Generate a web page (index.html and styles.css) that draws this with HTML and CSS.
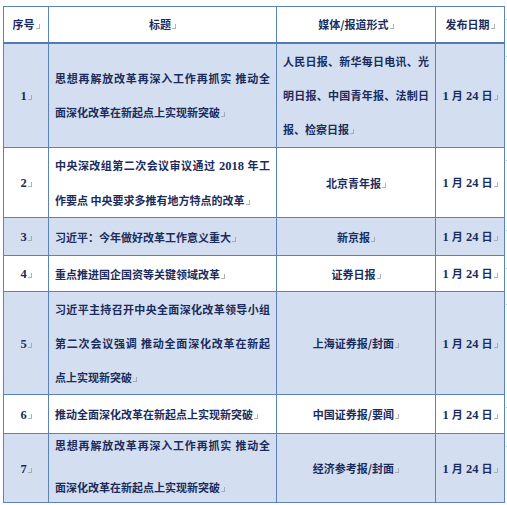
FILE: index.html
```html
<!DOCTYPE html>
<html lang="zh">
<head>
<meta charset="utf-8">
<title>媒体报道</title>
<link rel="stylesheet" href="styles.css">
</head>
<body>
<table class="grid">
  <colgroup>
    <col class="w1"><col class="w2"><col class="w3"><col class="w4">
  </colgroup>
  <tr class="head r-h">
    <td class="cell c">序号<i class="pm"></i></td>
    <td class="cell c">标题<i class="pm"></i></td>
    <td class="cell c">媒体/报道形式<i class="pm"></i></td>
    <td class="cell c last">发布日期<i class="pm"></i></td>
  </tr>
  <tr class="band r-1">
    <td class="cell c"><span class="num">1</span><i class="pm"></i></td>
    <td class="cell"><span class="jl">思想再解放改革再深入工作再抓实 推动全</span><span class="ln">面深化改革在新起点上实现新突破<i class="pm"></i></span></td>
    <td class="cell"><span class="jl">人民日报、新华每日电讯、光</span><span class="jl">明日报、中国青年报、法制日</span><span class="ln">报、检察日报<i class="pm"></i></span></td>
    <td class="cell c last"><span class="num">1 </span>月<span class="num"> 24 </span>日<i class="pm"></i></td>
  </tr>
  <tr class="r-2">
    <td class="cell c"><span class="num">2</span><i class="pm"></i></td>
    <td class="cell"><span class="jl">中央深改组第二次会议审议通过<span class="num"> 2018 </span>年工</span><span class="ln">作要点 中央要求多推有地方特点的改革<i class="pm"></i></span></td>
    <td class="cell c">北京青年报<i class="pm"></i></td>
    <td class="cell c last"><span class="num">1 </span>月<span class="num"> 24 </span>日<i class="pm"></i></td>
  </tr>
  <tr class="band r-3">
    <td class="cell c"><span class="num">3</span><i class="pm"></i></td>
    <td class="cell">习近平：今年做好改革工作意义重大<i class="pm"></i></td>
    <td class="cell c">新京报<i class="pm"></i></td>
    <td class="cell c last"><span class="num">1 </span>月<span class="num"> 24 </span>日<i class="pm"></i></td>
  </tr>
  <tr class="r-4">
    <td class="cell c"><span class="num">4</span><i class="pm"></i></td>
    <td class="cell">重点推进国企国资等关键领域改革<i class="pm"></i></td>
    <td class="cell c">证券日报<i class="pm"></i></td>
    <td class="cell c last"><span class="num">1 </span>月<span class="num"> 24 </span>日<i class="pm"></i></td>
  </tr>
  <tr class="band r-5">
    <td class="cell c"><span class="num">5</span><i class="pm"></i></td>
    <td class="cell"><span class="jl">习近平主持召开中央全面深化改革领导小组</span><span class="jl">第二次会议强调 推动全面深化改革在新起</span><span class="ln">点上实现新突破<i class="pm"></i></span></td>
    <td class="cell c">上海证券报/封面<i class="pm"></i></td>
    <td class="cell c last"><span class="num">1 </span>月<span class="num"> 24 </span>日<i class="pm"></i></td>
  </tr>
  <tr class="r-6">
    <td class="cell c"><span class="num">6</span><i class="pm"></i></td>
    <td class="cell">推动全面深化改革在新起点上实现新突破<i class="pm"></i></td>
    <td class="cell c">中国证券报/要闻<i class="pm"></i></td>
    <td class="cell c last"><span class="num">1 </span>月<span class="num"> 24 </span>日<i class="pm"></i></td>
  </tr>
  <tr class="band r-7">
    <td class="cell c"><span class="num">7</span><i class="pm"></i></td>
    <td class="cell top"><span class="jl l7a">思想再解放改革再深入工作再抓实 推动全</span><span class="ln l7b">面深化改革在新起点上实现新突破<i class="pm"></i></span></td>
    <td class="cell c">经济参考报/封面<i class="pm"></i></td>
    <td class="cell c last"><span class="num">1 </span>月<span class="num"> 24 </span>日<i class="pm"></i></td>
  </tr>
</table>
</body>
</html>
```

FILE: styles.css
```css
html, body {
  margin: 0;
  background: #ffffff;
}
body {
  padding: 6px 0 0 3px;
  font-family: "Noto Sans CJK SC", "Noto Sans", sans-serif;
  font-size: 11px;
  font-weight: bold;
  color: #1b2c5c;
}
.grid {
  border-collapse: collapse;
  table-layout: fixed;
  width: 501px;
}
.w1 { width: 45px; }
.w2 { width: 228px; }
.w3 { width: 159px; }
.w4 { width: 69px; }

.cell {
  border: 1px solid #5a82bc;
  padding: 0 6px;
  vertical-align: middle;
  line-height: 34px;
  text-align: left;
  white-space: pre;
}
.cell.c { text-align: center; }
.cell.top { vertical-align: top; }
.head .cell {
  border-bottom: 2px solid #4e7bb8;
  background: #ffffff;
}
.band .cell { background: #d3dff0; }

.last { position: relative; }
.last::after {
  content: "";
  position: absolute;
  right: -6px;
  top: 8px;
  width: 3px;
  height: 4px;
  border-right: 1px solid #9aa0a8;
  border-bottom: 1px solid #9aa0a8;
  opacity: 0.8;
}

.r-h { height: 36px; }
.r-1 { height: 105px; }
.r-2 { height: 70px; }
.r-3 { height: 38px; }
.r-4 { height: 34px; }
.r-5 { height: 103px; }
.r-6 { height: 39px; }
.r-7 { height: 69px; }

.jl {
  display: block;
  text-align: justify;
  text-align-last: justify;
}
.ln { display: block; }
.l7a { line-height: 22px; }
.l7b { line-height: 22px; margin-top: 20px; }

.num {
  font-family: "Liberation Serif", serif;
  font-size: 12.5px;
  font-weight: bold;
}

.pm {
  display: inline-block;
  width: 3px;
  height: 4px;
  margin-left: 1px;
  border-right: 1px solid #9aa0a8;
  border-bottom: 1px solid #9aa0a8;
  vertical-align: baseline;
  opacity: 0.8;
}
```
